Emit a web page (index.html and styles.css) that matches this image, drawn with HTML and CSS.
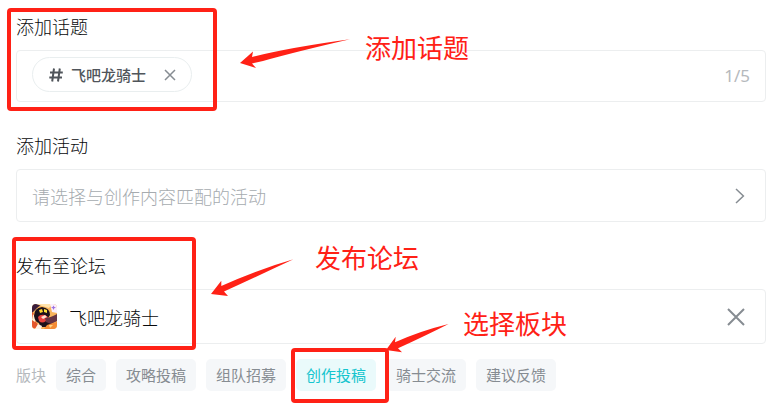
FILE: index.html
```
<!DOCTYPE html>
<html lang="zh-CN">
<head>
<meta charset="UTF-8" />
<meta name="viewport" content="width=device-width, initial-scale=1" />
<title>发布设置</title>
<link rel="stylesheet" href="styles.css">
</head>
<body>
  <form class="publish-form">
    <section class="field">
      <h2 class="field-title">添加话题</h2>
      <div class="box topic-box">
        <span class="topic">
          <svg class="hash" viewBox="0 0 14 14" aria-hidden="true"><path d="M5 .5L3.200 13.500M10.800 .5L9 13.500M1 4.500H13.800M.3 9.500H13" /></svg>
          <span class="topic-name">飞吧龙骑士</span>
          <button type="button" class="icon-btn" aria-label="移除话题">
            <svg class="close-small" viewBox="0 0 12 12"><path d="M1 1L11 11M11 1L1 11" /></svg>
          </button>
        </span>
        <span class="count">1/5</span>
      </div>
    </section>

    <section class="field">
      <h2 class="field-title">添加活动</h2>
      <button type="button" class="box activity-box">
        <span>请选择与创作内容匹配的活动</span>
        <svg class="chevron" viewBox="0 0 10 16" aria-hidden="true"><path d="M1 1L8.4 8L1 15" /></svg>
      </button>
    </section>

    <section class="field">
      <h2 class="field-title">发布至论坛</h2>
      <div class="box forum-box">
        <svg class="forum-icon" viewBox="0 0 25 25" aria-hidden="true">
          <rect width="25" height="25" fill="#f9b45b" />
          <path d="M0 0H10L5 4L0 9Z" fill="#3a1d3c" />
          <path d="M4 0H20L17 4L10 2Z" fill="#ffe3ac" />
          <path d="M18 0H25V9L20 8Z" fill="#fbeefa" />
          <path d="M21.500 1.500L22.300 3L24 3.500L22.300 4.200L21.500 6L20.700 4.200L19 3.500L20.700 3Z" fill="#9a6fe0" />
          <path d="M0 8L4 12L3 17L8 23L0 25Z" fill="#e4572c" />
          <path d="M1 10L4 14L3 18L0 16Z" fill="#fff0d2" />
          <path d="M2 12Q2 4 10 3Q18 4 18 11L16 14L20 20L16 23H8L7 19Q3 18 2 12Z" fill="#1c111a" />
          <path d="M7 6L10 5L11 8L8 9Z" fill="#ffd22e" />
          <path d="M12 5L15 6V9L12 8Z" fill="#ffe23c" />
          <path d="M6 13Q8 10 13 11L16 13L14 17Q10 20 7 17Z" fill="#e7413d" />
          <path d="M9 13L13 11L15 13L11 15Z" fill="#ffe1d1" />
          <path d="M13 14Q18 14 25 10V17L19 20L14 18Z" fill="#673444" />
          <path d="M15 21L21 19L25 18V25H12Z" fill="#f48b35" />
          <path d="M6 20L10 22L9 25H3Z" fill="#fff1e5" />
          <path d="M17 21L21 21L18 24Z" fill="#ffd783" />
        </svg>
        <span class="forum-name">飞吧龙骑士</span>
        <button type="button" class="icon-btn forum-remove" aria-label="移除论坛">
          <svg class="close-large" viewBox="0 0 18 18"><path d="M1 1L17 17M17 1L1 17" /></svg>
        </button>
      </div>
      <div class="sections">
        <span class="sections-label">版块</span>
        <button type="button" class="section-btn">综合</button>
        <button type="button" class="section-btn">攻略投稿</button>
        <button type="button" class="section-btn">组队招募</button>
        <button type="button" class="section-btn active">创作投稿</button>
        <button type="button" class="section-btn">骑士交流</button>
        <button type="button" class="section-btn">建议反馈</button>
      </div>
    </section>
  </form>

  <!-- 标注层 -->
  <div class="notes">
    <div class="frame frame-topic"></div>
    <div class="frame frame-forum"></div>
    <div class="frame frame-section"></div>
    <svg class="arrows" width="470" height="360" aria-hidden="true">
      <path d="M240 63L253 51.500L252 57Q290 47.500 350 39.300Q297 51.500 263 61L252 63.500L256 68Z" />
      <path d="M211 294L221.300 280.700V286Q258 269.500 293.500 259.300Q263 273.500 224 291.500L228 296Z" />
      <path d="M386 350L395.700 336.700L395 342.300Q420 331 448.500 324Q427 335 398 348.300L402 352.300Z" />
    </svg>
    <span class="note note-topic">添加话题</span>
    <span class="note note-forum">发布论坛</span>
    <span class="note note-section">选择板块</span>
  </div>
</body>
</html>
```

FILE: styles.css
```
* { box-sizing: border-box; }
body {
  position: relative;
  min-height: 100vh;
  margin: 0;
  background: #fff;
  color: #08090b;
  font-family: "Noto Sans CJK SC", sans-serif;
  font-size: 18px;
  line-height: 24px;
}
button { font: inherit; cursor: pointer; }
svg { display: block; flex: none; }

.publish-form { padding: 14px 15px 19px 16px; }
.field { margin-bottom: 31px; }
.field:last-child { margin-bottom: 0; }
.field-title { margin: 0 0 12px; font-size: 18px; font-weight: 300; }

.box {
  display: flex;
  align-items: center;
  width: 100%;
  padding: 0 15px;
  border: 1px solid #eceeef;
  border-radius: 4px;
  background: #fff;
}
.topic-box { justify-content: space-between; height: 52px; }
.activity-box {
  justify-content: space-between;
  height: 53px;
  padding-right: 20px;
  color: #a6abaf;
  font-weight: 300;
}
.forum-box { height: 55px; padding-right: 20px; }

/* 话题 */
.topic {
  display: flex;
  align-items: center;
  height: 35px;
  margin-bottom: 3px;
  padding: 0 15px 0 16px;
  border: 1px solid #e9eeef;
  border-radius: 18px;
  color: #50555b;
  font-size: 15px;
  font-weight: 500;
}
.hash { width: 14px; height: 14px; fill: none; stroke: #50555b; stroke-width: 2; }
.topic-name { margin: 0 18px 0 8px; }
.count { color: #b5b9bd; font-family: "Noto Sans", "Noto Sans CJK SC", sans-serif; font-size: 17px; }

.icon-btn { padding: 0; border: 0; background: none; }
.close-small { width: 12px; height: 12px; stroke: #868c92; stroke-width: 1.5; }
.close-large { width: 18px; height: 18px; stroke: #868c92; stroke-width: 2; }
.chevron { width: 10px; height: 16px; fill: none; stroke: #868c92; stroke-width: 1.5; }

/* 论坛 */
.forum-icon { width: 25px; height: 25px; border-radius: 4px; }
.forum-name { margin-left: 12px; font-weight: 300; }
.forum-remove { margin-left: auto; }

.sections { display: flex; flex-wrap: wrap; align-items: center; gap: 10px; margin-top: 15px; font-size: 15px; }
.sections-label { color: #b5b9bd; }
.section-btn {
  height: 32px;
  padding: 0 10px;
  border: 0;
  border-radius: 5px;
  background: #f5f7f9;
  color: #868c92;
}
.section-btn.active { background: #eafafb; color: #15c5ce; }

/* 标注 */
.notes { position: absolute; top: 0; left: 0; pointer-events: none; }
.frame { position: absolute; border: 4px solid #ff2116; border-radius: 4px; }
.frame-topic { left: 7px; top: 8px; width: 210px; height: 103px; }
.frame-forum { left: 12px; top: 237px; width: 184px; height: 113px; }
.frame-section { left: 291px; top: 348px; width: 98px; height: 55px; }
.arrows { position: absolute; top: 0; left: 0; fill: #ff2116; }
.note { position: absolute; color: #ff2116; font-size: 26px; line-height: 32px; white-space: nowrap; }
.note-topic { left: 365px; top: 31px; }
.note-forum { left: 315px; top: 241px; }
.note-section { left: 463px; top: 307px; }
```
